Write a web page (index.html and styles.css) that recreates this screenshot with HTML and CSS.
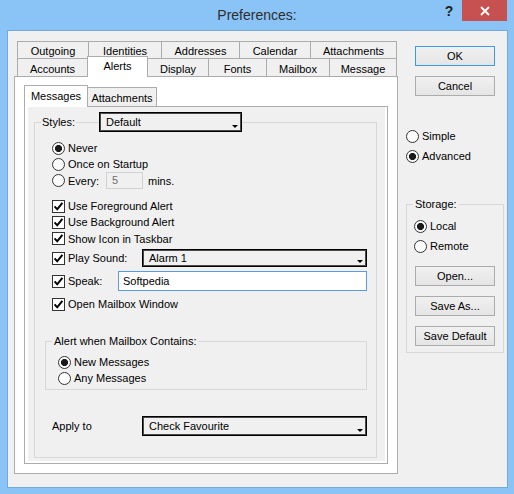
FILE: index.html
```html
<!DOCTYPE html>
<html>
<head>
<meta charset="utf-8">
<title>Preferences</title>
<link rel="stylesheet" href="styles.css">
</head>
<body>
<div class="window">
  <div class="titlebar">
    <div class="tb-left"></div>
    <div class="title">Preferences:</div>
    <div class="caption-btns">
      <span class="help">?</span>
      <span class="close"><svg width="10" height="10" viewBox="0 0 10 10"><path d="M1 1L9 9M9 1L1 9" stroke="#fff" stroke-width="1.8" fill="none"/></svg></span>
    </div>
  </div>
  <div class="client">
    <div class="tabctl">
      <div class="tabrow row1">
        <div class="tab w-outgoing">Outgoing</div>
        <div class="tab w-identities">Identities</div>
        <div class="tab w-addresses">Addresses</div>
        <div class="tab w-calendar">Calendar</div>
        <div class="tab w-attach">Attachments</div>
      </div>
      <div class="tabrow row2">
        <div class="tab w-accounts">Accounts</div>
        <div class="tab sel w-alerts">Alerts</div>
        <div class="tab w-display">Display</div>
        <div class="tab w-fonts">Fonts</div>
        <div class="tab w-mailbox">Mailbox</div>
        <div class="tab w-message">Message</div>
      </div>
      <div class="panel">
        <div class="subtabs">
          <div class="subtab sel w-messages">Messages</div>
          <div class="subtab w-subattach">Attachments</div>
        </div>
        <div class="subpanel">
          <div class="page">
            <fieldset class="group g-styles">
              <legend class="legend-styles">
                <div class="legend-row">
                  <span class="lbl-styles">Styles:</span>
                  <span class="legend-line"></span>
                  <div class="combo c-styles"><span>Default</span><i class="arrow"></i></div>
                </div>
              </legend>
              <div class="row r-never"><span class="radio on"></span>Never</div>
              <div class="row"><span class="radio"></span>Once on Startup</div>
              <div class="row r-every"><span class="radio"></span><span class="lbl-every">Every:</span><span class="numbox">5</span><span class="mins">mins.</span></div>
              <div class="row r-fg"><span class="check"><svg width="11" height="11" viewBox="0 0 11 11"><path d="M1.6 5.4L4.2 8.3L9.4 1.8" stroke="#000" stroke-width="2" fill="none"/></svg></span>Use Foreground Alert</div>
              <div class="row"><span class="check"><svg width="11" height="11" viewBox="0 0 11 11"><path d="M1.6 5.4L4.2 8.3L9.4 1.8" stroke="#000" stroke-width="2" fill="none"/></svg></span>Use Background Alert</div>
              <div class="row r-tall"><span class="check"><svg width="11" height="11" viewBox="0 0 11 11"><path d="M1.6 5.4L4.2 8.3L9.4 1.8" stroke="#000" stroke-width="2" fill="none"/></svg></span>Show Icon in Taskbar</div>
              <div class="row r-sound"><span class="check"><svg width="11" height="11" viewBox="0 0 11 11"><path d="M1.6 5.4L4.2 8.3L9.4 1.8" stroke="#000" stroke-width="2" fill="none"/></svg></span><span class="lbl-sound">Play Sound:</span><div class="combo c-wide"><span>Alarm 1</span><i class="arrow"></i></div></div>
              <div class="row r-speak"><span class="check"><svg width="11" height="11" viewBox="0 0 11 11"><path d="M1.6 5.4L4.2 8.3L9.4 1.8" stroke="#000" stroke-width="2" fill="none"/></svg></span><span class="lbl-speak">Speak:</span><div class="textbox">Softpedia</div></div>
              <div class="row r-open"><span class="check"><svg width="11" height="11" viewBox="0 0 11 11"><path d="M1.6 5.4L4.2 8.3L9.4 1.8" stroke="#000" stroke-width="2" fill="none"/></svg></span>Open Mailbox Window</div>
              <fieldset class="group g-alert">
                <legend class="legend-text">Alert when Mailbox Contains:</legend>
                <div class="row r-new"><span class="radio on"></span>New Messages</div>
                <div class="row r-any"><span class="radio"></span>Any Messages</div>
              </fieldset>
              <div class="row r-apply"><span class="lbl-apply">Apply to</span><div class="combo c-wide"><span>Check Favourite</span><i class="arrow"></i></div></div>
            </fieldset>
          </div>
        </div>
      </div>
    </div>
    <div class="side">
      <div class="btn btn-ok">OK</div>
      <div class="btn btn-cancel">Cancel</div>
      <div class="row r-simple"><span class="radio"></span>Simple</div>
      <div class="row r-adv"><span class="radio on"></span>Advanced</div>
      <fieldset class="group g-storage">
        <legend class="legend-text">Storage:</legend>
        <div class="row r-local"><span class="radio on"></span>Local</div>
        <div class="row r-remote"><span class="radio"></span>Remote</div>
        <div class="btn btn-open">Open...</div>
        <div class="btn btn-s">Save As...</div>
        <div class="btn btn-s">Save Default</div>
      </fieldset>
    </div>
  </div>
</div>
</body>
</html>
```
FILE: styles.css
```css
* { box-sizing: border-box; }
body {
  margin: 0;
  background: #8ac3f6;
  font-family: "Liberation Sans", Arial, sans-serif;
  font-size: 11px;
  color: #000;
}
.window {
  width: 514px;
  height: 494px;
  background: #8ac3f6;
  overflow: hidden;
}
/* title bar */
.titlebar {
  height: 30px;
  padding: 0 7px;
  display: grid;
  grid-template-columns: 1fr auto 1fr;
  align-items: start;
}
.title {
  font-size: 14px;
  line-height: 31px;
  color: #2e2e2e;
}
.caption-btns {
  justify-self: end;
  display: flex;
  align-items: flex-start;
}
.help {
  width: 26px;
  height: 21px;
  line-height: 22px;
  text-align: center;
  font-weight: bold;
  font-size: 14px;
  color: #1e1e1e;
}
.close {
  width: 45px;
  height: 21px;
  background: #c75050;
  display: flex;
  align-items: center;
  justify-content: center;
}
/* client */
.client {
  margin-left: 7px;
  width: 501px;
  height: 458px;
  border: 1px solid #74a8e0;
  background: #f0f0f0;
  padding: 10px 0 0 6px;
  display: flex;
  align-items: flex-start;
}
.tabctl { width: 384px; flex: none; }
.tabrow { display: flex; padding-left: 3px; }
.row1 { height: 17px; }
.row2 { height: 18px; align-items: flex-start; }
.tab {
  border: 1px solid #acacac;
  border-bottom: 0;
  margin-right: -1px;
  background: #f0f0f0;
  display: flex;
  align-items: center;
  justify-content: center;
  flex: none;
}
.row1 .tab { height: 17px; padding-top: 1px; }
.row2 .tab { height: 18px; padding-top: 2px; }
.row2 .tab.sel {
  height: 21px;
  margin-top: -2px;
  padding-top: 0;
  padding-bottom: 2px;
  background: #fff;
  position: relative;
  z-index: 1;
}
.w-outgoing { width: 72px; }
.w-identities { width: 74px; }
.w-addresses { width: 79px; }
.w-calendar { width: 72px; }
.w-attach { width: 87px; }
.w-accounts { width: 71px; }
.w-alerts { width: 61px; }
.w-display { width: 62px; }
.w-fonts { width: 59px; }
.w-mailbox { width: 64px; }
.w-message { width: 68px; }

.panel {
  height: 398px;
  border: 1px solid #acacac;
  background: #fff;
  padding: 10px 9px 9px 9px;
}
.subtabs { display: flex; height: 19px; align-items: flex-start; }
.subtab {
  height: 19px;
  border: 1px solid #acacac;
  border-bottom: 0;
  margin-right: -1px;
  background: #f0f0f0;
  display: flex;
  align-items: center;
  justify-content: center;
  padding-top: 1px;
  flex: none;
}
.subtab.sel {
  height: 22px;
  margin-top: -2px;
  padding-top: 0;
  padding-bottom: 2px;
  background: #fff;
  position: relative;
  z-index: 1;
}
.w-messages { width: 64px; }
.w-subattach { width: 70px; }
.subpanel {
  height: 358px;
  border: 1px solid #acacac;
  background: #fff;
  padding: 0 2px 2px 3px;
}
.page {
  height: 100%;
  background: #f0f0f0;
  padding: 5px 0 0 6px;
}
/* group boxes */
.group {
  margin: 0;
  padding: 0;
  border: 1px solid #d8d8d8;
  min-width: 0;
}
.g-styles { width: 343px; padding-bottom: 21px; }
.legend-styles { margin-left: 6px; padding: 0; }
.legend-row { display: flex; align-items: center; height: 20px; }
.lbl-styles { width: 35px; padding-left: 1px; }
.legend-line { width: 23px; height: 1px; background: #d8d8d8; }
.legend-text {
  margin-left: 6px;
  padding: 0 2px;
  line-height: 14px;
}
.row {
  display: flex;
  align-items: center;
  height: 16px;
  padding-left: 17px;
  white-space: nowrap;
}
.r-never { margin-top: 8px; }
.r-every { height: 17px; }
.r-fg { margin-top: 9px; }
.r-tall { height: 17px; }
.r-sound { margin-top: 2px; height: 18px; }
.r-speak { margin-top: 4px; height: 20px; }
.r-open { margin-top: 5px; }
.r-apply { margin-top: 26px; height: 20px; }
.radio {
  width: 13px;
  height: 13px;
  border: 1px solid #333;
  border-radius: 50%;
  background: #fdfdfd;
  flex: none;
  margin-right: 3px;
}
.radio.on {
  background: radial-gradient(circle, #1a1a1a 3.2px, #fdfdfd 3.9px);
}
.check {
  width: 13px;
  height: 13px;
  border: 1px solid #333;
  background: #fff;
  flex: none;
  margin-right: 3px;
  display: flex;
  align-items: center;
  justify-content: center;
}
.check svg { display: block; }
.lbl-every { width: 38px; }
.numbox {
  width: 37px;
  height: 17px;
  border: 1px solid #d2d2d2;
  background: #f0f0f0;
  color: #6d6d6d;
  padding-left: 5px;
  line-height: 15px;
}
.mins { margin-left: 5px; }
.lbl-sound { width: 74px; }
.lbl-speak { width: 50px; }
.lbl-apply { width: 90px; }
.combo {
  display: flex;
  justify-content: space-between;
  align-items: center;
  border: 1px solid #000;
  box-shadow: inset 0 0 0 1px #4a4a4a;
  background: #f0f0f0;
  padding: 0 3px 0 6px;
  flex: none;
}
.c-styles { width: 143px; height: 20px; }
.c-wide { width: 225px; height: 100%; }
.arrow {
  align-self: flex-end;
  margin-bottom: 3px;
  width: 0;
  height: 0;
  border-left: 3px solid transparent;
  border-right: 3px solid transparent;
  border-top: 3px solid #000;
}
.textbox {
  width: 249px;
  height: 20px;
  border: 1px solid #569de5;
  background: #fff;
  padding-left: 4px;
  line-height: 18px;
}
.g-alert {
  margin-left: 10px;
  margin-top: 22px;
  width: 322px;
  padding: 6px 0 3px 0;
}
.g-alert .row { padding-left: 12px; }
/* side column */
.side {
  width: 98px;
  margin-left: 8px;
  flex: none;
}
.btn {
  width: 80px;
  height: 20px;
  border: 1px solid #acacac;
  background: linear-gradient(#f0f0f0, #e5e5e5);
  display: flex;
  align-items: center;
  justify-content: center;
}
.btn-ok { margin: 5px 0 0 9px; border-color: #3c9be8; }
.btn-cancel { margin: 10px 0 0 9px; }
.side .row { padding-left: 0; }
.r-simple { margin-top: 32px; }
.r-adv { margin-top: 4px; }
.g-storage {
  width: 98px;
  margin-top: 33px;
  padding: 7px 0 6px 0;
}
.g-storage .row { padding-left: 7px; }
.r-remote { margin-top: 4px; }
.btn-open { margin: 12px 0 0 8px; }
.btn-s { margin: 10px 0 0 8px; }
```
